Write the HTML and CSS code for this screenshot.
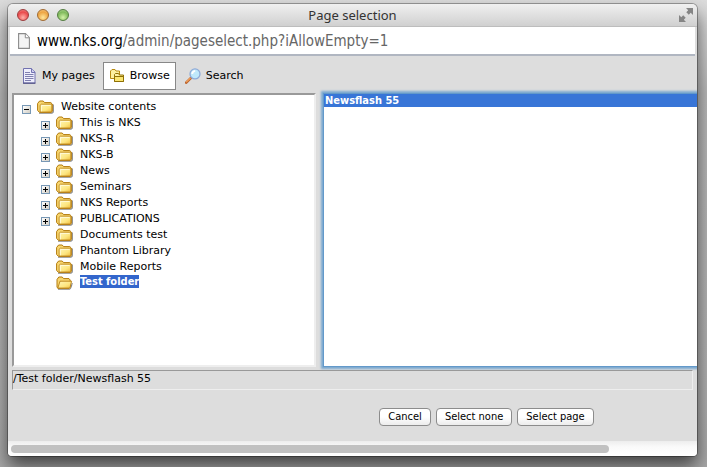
FILE: index.html
```html
<!DOCTYPE html>
<html lang="en">
<head>
<meta charset="utf-8">
<title>Page selection</title>
<link rel="stylesheet" href="styles.css">
</head>
<body>
<svg class="defs" width="0" height="0" aria-hidden="true">
  <defs>
    <linearGradient id="gold" x1="0" y1="0" x2="1" y2="1"><stop offset="0" stop-color="#fff6b8"/><stop offset=".6" stop-color="#fde680"/><stop offset="1" stop-color="#f0bd3e"/></linearGradient>
    <symbol id="folder" viewBox="0 0 17 14">
      <path d="M2 13.2H14.5Q16.3 13.2 16.3 11V4.5" fill="none" stroke="#555" stroke-opacity=".7" stroke-width="1.2"/>
      <path d="M.6 10.5V3.5L2.6 1H6.2L7.6 2.6H13.8L15.3 4V11.4L14 12.4H2.6Z" fill="#f8d66e" stroke="#b27a0c"/>
      <path d="M3.1 12V5.2L4.2 4.2H14.8V12Z" fill="url(#gold)" stroke="#b9821a" stroke-width=".8"/>
      <path d="M4.5 11.3V5.5H13.6" fill="none" stroke="#fffbe0" stroke-width=".8"/>
    </symbol>
    <symbol id="folder-open" viewBox="0 0 17 14">
      <path d="M2 13.2H13.5Q15 12.8 16.2 7" fill="none" stroke="#555" stroke-opacity=".7" stroke-width="1.2"/>
      <path d="M1 11.4V3.5L2.8 1H6.2L7.6 2.6H13L14.2 4V11L13 12.3H2Z" fill="#f8d66e" stroke="#b27a0c"/>
      <path d="M1.8 12.1L4 5.2H15.6L13.9 12.1Z" fill="url(#gold)" stroke="#b9821a" stroke-width=".9"/>
    </symbol>
  </defs>
</svg>
<div class="window">
  <header class="titlebar">
    <div class="lights">
      <button class="light red" aria-label="Close"></button>
      <button class="light amber" aria-label="Minimize"></button>
      <button class="light green" aria-label="Zoom"></button>
    </div>
    <h1>Page selection</h1>
    <button class="expand" aria-label="Full screen"><svg width="14" height="14" viewBox="0 0 14 14"><path d="M7 0H14V7L11.7 4.8L9.8 6.7L7.3 4.2L9.2 2.3ZM7 14H0V7L2.3 9.2L4.2 7.3L6.7 9.8L4.8 11.7Z" fill="#858585"/></svg></button>
  </header>
  <div class="address">
    <svg width="12" height="16" viewBox="0 0 12 16"><path d="M.6.6H7.5L11.4 4.6V15.4H.6Z" fill="#f4f4f4" stroke="#8b8b8b" stroke-width="1.1"/><path d="M7.3.8V4.8H11.2" fill="#fff" stroke="#8b8b8b"/></svg>
    <span class="url"><b>www.nks.org</b>/admin/pageselect.php?iAllowEmpty=1</span>
  </div>
  <main>
    <nav class="tabs">
      <button class="tab"><svg width="16" height="16" viewBox="0 0 16 16"><path d="M1.5.5H9.5L13 4V15H1.5Z" fill="#eeeefc" stroke="#7272b0"/><path d="M1 15.2H13.5" stroke="#45457c"/><path d="M9.5.5V4.5H13" fill="#cfcff0" stroke="#7272b0"/><path d="M3 4.5H8M3 6.5H11.5M3 8.5H11.5M3 10.5H11.5M3 12.5H9" stroke="#7f7faf"/></svg>My pages</button>
      <button class="tab active"><svg width="16" height="16" viewBox="0 0 16 16"><path d="M1.5 10.5V3L3 1.5H6L7 3H10.5V10.5Z" fill="#fdf0a0" stroke="#b88a10"/><path d="M5.5 13.5V6.5L6.5 5.5H9.5L10.5 7H14.5V13.5Z" fill="url(#gold)" stroke="#8f7005"/><path d="M5.5 13.5V8.5H14.5V13.5Z" fill="#fbe672" stroke="#8f7005"/></svg>Browse</button>
      <button class="tab"><svg width="16" height="16" viewBox="0 0 16 16"><path d="M1.2 14.7L6 9.9" stroke="#bd6530" stroke-width="2.6" stroke-linecap="round"/><path d="M1.2 14.2L5.6 9.8" stroke="#f5a65c" stroke-width="1.2"/><circle cx="10" cy="5.9" r="5" fill="#bfe8fb" stroke="#8eaad8" stroke-width="1.3"/><path d="M7.2 6Q7.3 3.1 10.2 2.8" fill="none" stroke="#fff" stroke-width="1.8"/></svg>Search</button>
    </nav>
    <div class="panes">
      <section class="tree" aria-label="Folders">
        <div class="row"><button class="toggle open" aria-label="Collapse"></button><svg class="folder"><use href="#folder"/></svg><span>Website contents</span></div>
        <ul>
          <li class="row"><button class="toggle" aria-label="Expand"></button><svg class="folder"><use href="#folder"/></svg><span>This is NKS</span></li>
          <li class="row"><button class="toggle" aria-label="Expand"></button><svg class="folder"><use href="#folder"/></svg><span>NKS-R</span></li>
          <li class="row"><button class="toggle" aria-label="Expand"></button><svg class="folder"><use href="#folder"/></svg><span>NKS-B</span></li>
          <li class="row"><button class="toggle" aria-label="Expand"></button><svg class="folder"><use href="#folder"/></svg><span>News</span></li>
          <li class="row"><button class="toggle" aria-label="Expand"></button><svg class="folder"><use href="#folder"/></svg><span>Seminars</span></li>
          <li class="row"><button class="toggle" aria-label="Expand"></button><svg class="folder"><use href="#folder"/></svg><span>NKS Reports</span></li>
          <li class="row"><button class="toggle" aria-label="Expand"></button><svg class="folder"><use href="#folder"/></svg><span>PUBLICATIONS</span></li>
          <li class="row leaf"><svg class="folder"><use href="#folder"/></svg><span>Documents test</span></li>
          <li class="row leaf"><svg class="folder"><use href="#folder"/></svg><span>Phantom Library</span></li>
          <li class="row leaf"><svg class="folder"><use href="#folder"/></svg><span>Mobile Reports</span></li>
          <li class="row leaf"><svg class="folder"><use href="#folder-open"/></svg><span class="selected">Test folder</span></li>
        </ul>
      </section>
      <select class="pages" size="12" aria-label="Pages"><option selected>Newsflash 55</option></select>
    </div>
    <output class="path">/Test folder/Newsflash 55</output>
    <div class="actions">
      <button>Cancel</button>
      <button>Select none</button>
      <button>Select page</button>
    </div>
  </main>
  <div class="scrollbar"><div class="thumb"></div></div>
</div>
</body>
</html>
```

FILE: styles.css
```css
* { box-sizing: border-box; }
body {
  margin: 0;
  min-height: 100vh;
  padding: 4px 10px 11px 8px;
  display: flex;
  background: linear-gradient(#dcdcdc, #b8b8b8 20%, #b0b0b0 80%, #a8a8a8);
  font: 11px/16px "DejaVu Sans", Verdana, sans-serif;
  color: #000;
  overflow: hidden;
}
button { font: inherit; color: inherit; padding: 0; border: 0; background: none; }
svg { flex: none; display: block; }
.defs { position: absolute; }
.window {
  flex: 1;
  min-width: 0;
  display: flex;
  flex-direction: column;
  background: #ddd;
  border-radius: 5px 5px 4px 4px;
  box-shadow: 0 0 0 1px rgba(0, 0, 0, .3), 0 10px 18px rgba(0, 0, 0, .6);
  overflow: hidden;
}
.titlebar {
  height: 23px;
  display: grid;
  grid-template-columns: 1fr auto 1fr;
  align-items: center;
  padding: 0 4px;
  background: linear-gradient(#f0f0f0, #d0d0d0);
  border-bottom: 1px solid #bdbdbd;
}
.titlebar h1 {
  margin: 0;
  font: 13px/18px "Noto Sans", "Lucida Grande", sans-serif;
  color: #333;
}
.lights { display: flex; gap: 8px; padding-left: 5px; }
.light {
  width: 12px;
  height: 12px;
  border-radius: 50%;
  border: 1px solid;
}
.red { background: radial-gradient(circle at 50% 75%, #ffb0a8, #e9494b 60%, #f09a98); border-color: #9c3a3b; }
.amber { background: radial-gradient(circle at 50% 75%, #ffe69a, #eda442 60%, #f8d090); border-color: #a0692f; }
.green { background: radial-gradient(circle at 50% 75%, #d3f2a8, #7fb95b 60%, #b8dca0); border-color: #527c3e; }
.expand { justify-self: end; }
.address {
  height: 29px;
  margin: 0 2px;
  padding: 0 8px;
  display: flex;
  align-items: center;
  gap: 7px;
  background: #fff;
  border-bottom: 2px solid #b0b6c1;
}
.url { font: 15px/20px "DejaVu Sans Condensed", "Lucida Grande", sans-serif; color: #666; white-space: nowrap; }
.url b { font-weight: normal; color: #000; }
main { flex: 1; display: flex; flex-direction: column; padding-left: 4px; }
.tabs { display: flex; padding: 6px 4px 3px; }
.tab {
  height: 28px;
  display: flex;
  align-items: center;
  gap: 5px;
  padding: 0 5px 0 4px;
  border: 1px solid transparent;
}
.tab.active { margin: 0 4px 0 2px; padding: 0 5px; background: #fff; border-color: #888; }
.tab:first-child { padding-left: 5px; gap: 4px; }
.panes { flex: 1; display: flex; gap: 7px; }
.tree {
  flex: 0 0 304px;
  padding: 4px 8px;
  background: #fff;
  border: 2px solid;
  border-color: #999 #eee #eee #999;
}
.tree ul { list-style: none; margin: 0; padding: 0 0 0 19px; }
.row { display: flex; align-items: center; height: 16px; white-space: nowrap; }
.leaf { padding-left: 15px; }
.folder { width: 17px; height: 14px; margin-right: 7px; }
.toggle {
  width: 9px;
  height: 9px;
  margin: 4px 6px 0 0;
  border: 1px solid #7898b5;
  background:
    linear-gradient(#000, #000) center / 5px 1px no-repeat,
    linear-gradient(#000, #000) center / 1px 5px no-repeat,
    linear-gradient(135deg, #fff, #d2cec4);
}
.toggle.open {
  background:
    linear-gradient(#000, #000) center / 5px 1px no-repeat,
    linear-gradient(135deg, #fff, #d2cec4);
}
.selected {
  align-self: flex-start;
  background: #3366cc;
  color: #fff;
  font: bold 11px/13px "DejaVu Sans Condensed", Verdana, sans-serif;
}
.pages {
  flex: 1;
  min-width: 0;
  padding: 0;
  margin: 0;
  font: inherit;
  background: #fff;
  border: 1px solid #6399ca;
  border-right: 0;
  border-radius: 0;
  box-shadow: 0 0 2px 2px #7ba9d0;
  outline: 0;
  overflow: hidden;
}
.pages option {
  padding: 0 1px;
  min-height: 0;
  font: bold 11px/13px "DejaVu Sans Condensed", Verdana, sans-serif;
}
.pages option:checked { background: linear-gradient(#3875d7, #3875d7); color: #fff; }
.path {
  display: block;
  margin: 3px 4px 0 0;
  height: 20px;
  line-height: 15px;
  border: 1px solid;
  border-color: #999 #eee #eee #999;
}
.actions {
  display: flex;
  justify-content: center;
  gap: 5px;
  padding: 18px 0 15px 264px;
}
.actions button {
  height: 18px;
  padding: 0 8px;
  font: 11px/16px "DejaVu Sans Condensed", "Lucida Grande", sans-serif;
  border: 1px solid #8c8c8c;
  border-radius: 4px;
  background: linear-gradient(#fff, #fff 50%, #ececec);
}
.scrollbar { height: 15px; padding: 4px 3px 3px; background: linear-gradient(#ededed, #fafafa 40%, #fff); }
.thumb { width: 87.5%; height: 8px; border-radius: 4px; background: #c1c1c1; }
```
